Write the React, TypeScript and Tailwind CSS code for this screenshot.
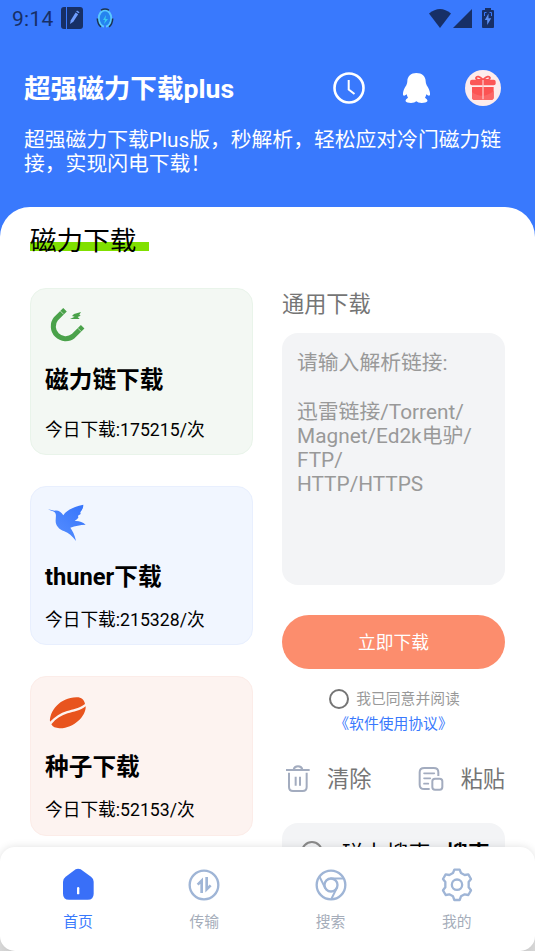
import { useState } from 'react';
import type { ReactNode } from 'react';

type DownloadCard = {
    title: string;
    count: string;
    className: string;
    titleClassName: string;
    countClassName: string;
    icon: ReactNode;
};

type Tab = {
    label: string;
    icon: ReactNode;
};

const MagnetIcon = () => (
    <svg className="w-[45px] h-[45px]" viewBox="77 84 135 135" fill="none">
        <path d="M137 104L110 131A37 37 0 0 0 162 183L190 155" stroke="#4aa24a" strokeWidth="15" />
        <path d="M123 108L133 118M176 160L186 170" stroke="#f3f8f3" strokeWidth="2" />
        <path d="M185 111L164 117L158 123L166 125L152 132H181L175 126L184 122L180 119Z" fill="#4aa24a" />
    </svg>
);

const BirdIcon = () => (
    <svg className="w-[45px] h-[45px]" viewBox="75 78 135 135">
        <defs>
            <linearGradient id="bird" x1="0" y1="1" x2="1" y2="0">
                <stop offset="0" stopColor="#5b93ff" />
                <stop offset="1" stopColor="#3573fb" />
            </linearGradient>
        </defs>
        <path
            d="M84 103L104 107C114 105 123 110 130 121C140 105 160 96 190 89C190 99 186 105 181 112L182 117L174 122L175 128C172 132 168 135 164 138C178 137 187 141 197 149C180 149 166 153 151 158C157 167 165 180 168 198C156 183 146 174 133 169C116 163 106 150 107 136C107 126 110 118 104 112C98 108 90 106 84 103Z"
            fill="url(#bird)"
        />
    </svg>
);

const SeedIcon = () => (
    <svg className="w-[45px] h-[45px]" viewBox="75 78 135 135" fill="none">
        <path
            d="M90 170C88 140 120 96 171 97C184 97 193 105 195 117C178 130 158 133 141 138C121 144 105 155 90 170Z"
            fill="#e8541e"
        />
        <path
            d="M94 178C108 161 125 150 143 145C161 140 181 137 197 124C199 155 158 192 118 190C107 189 98 186 94 178Z"
            fill="#e8541e"
        />
    </svg>
);

const cards: DownloadCard[] = [
    {
        title: '磁力链下载',
        count: '今日下载:175215/次',
        className: 'h-[167px] mb-[31px] bg-[#f3f8f3] border-[#e9f4ea]',
        titleClassName: 'mt-[14px]',
        countClassName: 'mt-5',
        icon: <MagnetIcon />,
    },
    {
        title: 'thuner下载',
        count: '今日下载:215328/次',
        className: 'h-[159px] mb-[31px] bg-[#f1f6ff] border-[#e8effe]',
        titleClassName: 'mt-[13px]',
        countClassName: 'mt-[13px]',
        icon: <BirdIcon />,
    },
    {
        title: '种子下载',
        count: '今日下载:52153/次',
        className: 'h-[160px] bg-[#fdf3f0] border-[#fcece8]',
        titleClassName: 'mt-[13px]',
        countClassName: 'mt-[13px]',
        icon: <SeedIcon />,
    },
];

const tabs: Tab[] = [
    {
        label: '首页',
        icon: (
            <svg className="w-9 h-9" viewBox="181 96 108 108">
                <path
                    d="M228 103Q235 99 243 103L274 125Q282 131 282 140V176Q282 194 264 194H208Q190 194 190 176V140Q190 131 198 125Z"
                    fill="#396ff8"
                />
                <rect x="232" y="156" width="7" height="22" rx="3.5" fill="#fff" />
            </svg>
        ),
    },
    {
        label: '传输',
        icon: (
            <svg className="w-9 h-9" viewBox="559 96 108 108" fill="none" stroke="#9fb5d6">
                <circle cx="613" cy="150" r="43" strokeWidth="7" />
                <path d="M606 174V137L594 149M621 126V163L633 151" strokeWidth="8" />
            </svg>
        ),
    },
    {
        label: '搜索',
        icon: (
            <svg className="w-9 h-9" viewBox="128 96 108 108" fill="none" stroke="#9fb5d6" strokeWidth="7">
                <circle cx="182" cy="150" r="43" />
                <circle cx="182" cy="150" r="19.5" />
                <path d="M180 130.500H219M165 160L148 126M200 158L183 192" strokeWidth="6" />
            </svg>
        ),
    },
    {
        label: '我的',
        icon: (
            <svg className="w-9 h-9" viewBox="507 96 108 108" fill="none" stroke="#9fb5d6" strokeWidth="7" strokeLinejoin="round">
                <path d="M553 104H569L573 114L584 120L595 118L603 132L596 141V157L603 166L595 180L584 178L573 184L569 195H553L549 184L538 178L527 180L519 166L526 157V141L519 132L527 118L538 120L549 114Z" />
                <circle cx="561" cy="149" r="15.500" />
            </svg>
        ),
    },
];

function StatusBar() {
    return (
        <div className="h-9 pl-3 pr-[41px] flex items-center justify-between text-[#172f66]">
            <div className="flex items-center">
                <span className="w-[49px] pt-px text-[21px] leading-9 tracking-[0.3px]">9:14</span>
                <svg className="w-[22px] h-[22px]" viewBox="0 0 22 22">
                    <rect width="22" height="22" rx="3" fill="#172f66" />
                    <path d="M5.500 0V22" stroke="#3979fd" strokeWidth="1" />
                    <path d="M9 17L9.800 13.200L14.600 5.600L17.200 7.200L12.300 14.800Z" fill="#6f9dff" />
                    <path d="M15.200 4.700L16 3.600L18.500 5.200L17.800 6.300Z" fill="#6f9dff" />
                </svg>
                <svg className="ml-[13px] w-[18px] h-[21px]" viewBox="0 0 18 21" fill="none">
                    <ellipse cx="9" cy="10.500" rx="6.300" ry="8.300" fill="#2583ef" stroke="#5ac8ff" strokeWidth="2" />
                    <path d="M5 18.800C3 17.500 1.500 14.500 1.300 10.500M5 2.200Q9 0 13 2.200M16.700 10.500C16.500 14.500 15 17.500 13 18.800" stroke="#1b344f" strokeWidth="1.500" />
                    <path d="M10 7L7 12H9L8 16L12 11H9.500Z" fill="#39c9ef" />
                    <path d="M9 17V21" stroke="#3979fd" strokeWidth="2" />
                </svg>
            </div>
            <div className="flex items-center">
                <svg className="w-[22px] h-[19px]" viewBox="0 0 22 19" fill="currentColor">
                    <path d="M0 4.500Q11-4.500 22 4.500L11 19Z" />
                </svg>
                <svg className="ml-0.5 w-[19px] h-[19px]" viewBox="0 0 19 19" fill="currentColor">
                    <path d="M19 0V19H0Z" />
                </svg>
                <svg className="ml-2.5 mb-px w-3 h-5" viewBox="0 0 12 20">
                    <path d="M3 2V0H9V2H11Q12 2 12 3V19Q12 20 11 20H1Q0 20 0 19V3Q0 2 1 2Z" fill="#172f66" />
                    <path d="M6.500 5.500L2.800 12H5.200V17L9.200 10.300H6.500Z" fill="#5b8ff5" />
                    <path d="M2.500 8V4.500H4.500M7.500 4.500H9.500V8" stroke="#3979fd" fill="none" />
                </svg>
            </div>
        </div>
    );
}

function Header() {
    return (
        <header className="px-6 text-white">
            <div className="flex items-center justify-between h-[104px] pr-2.5">
                <h1 className="pt-0.5 text-[26.600px] leading-10 font-bold">超强磁力下载plus</h1>
                <div className="flex items-center">
                    <svg className="w-8 h-8" viewBox="0 0 32 32" fill="none" stroke="#fff">
                        <circle cx="16" cy="16" r="14.500" strokeWidth="2.600" />
                        <path d="M15.700 8V17.500L21.500 22" strokeWidth="2" />
                    </svg>
                    <svg className="ml-[38px] w-[27px] h-[30px]" viewBox="309 219 81 90" fill="#fff">
                        <path d="M349 219C366 219 377 229 377 244Q377 250 380 256C387 266 391 276 390 285Q387 290 379 283Q378 289 375 293Q384 298 382 304Q378 309 365 309Q354 309 349 304Q344 309 333 309Q320 309 317 304Q315 298 324 293Q321 289 320 283Q312 290 309 285C308 276 312 266 319 256Q322 250 322 244C322 229 333 219 349 219Z" />
                    </svg>
                    <svg className="ml-[35px] w-9 h-9" viewBox="495 210 108 108">
                        <circle cx="549" cy="264" r="54" fill="#fdecec" />
                        <path d="M549 239Q526 241 528 233Q532 224 549 239Q566 224 570 233Q572 241 549 239Z" fill="none" stroke="#f95353" strokeWidth="5" />
                        <rect x="510" y="239" width="77" height="17" rx="6" fill="#fb5757" />
                        <path d="M516 261H581V292Q581 300 573 300H524Q516 300 516 292Z" fill="#fc5353" />
                        <path d="M516 276Q548 300 581 273V292Q581 300 573 300H524Q516 300 516 292Z" fill="#fb6767" />
                        <path d="M549 240V298" stroke="#fdc4c4" strokeWidth="4" />
                    </svg>
                </div>
            </div>
            <p className="-mt-3 -mr-2 h-[79px] text-[20.800px] leading-[24.400px]">
                超强磁力下载Plus版，秒解析，轻松应对冷门磁力链
                <br />
                接，实现闪电下载！
            </p>
        </header>
    );
}

function ParsePanel() {
    const [agreed, setAgreed] = useState(false);

    return (
        <div className="w-[223px] flex flex-col text-[#757575]">
            <h3 className="h-[45px] pt-px text-[22.200px] leading-[30px]">通用下载</h3>
            <div className="h-[252px] px-[15px] pt-[18px] rounded-[16px] bg-[#f3f4f6] text-[#999] text-[20.800px] leading-[24.250px] whitespace-pre">
                {'请输入解析链接:\n\n迅雷链接/Torrent/\nMagnet/Ed2k电驴/\nFTP/\nHTTP/HTTPS'}
            </div>
            <button className="mt-[30px] h-[54px] pt-0.5 rounded-full bg-[#fc8d6d] text-white text-[17.800px]">立即下载</button>
            <button
                className="mt-[18px] ml-0.5 h-6 flex items-center justify-center text-[14.800px] text-[#999]"
                onClick={() => setAgreed(!agreed)}
            >
                <span className={agreed ? 'w-5 h-5 rounded-full border-2 border-[#757575] bg-[#3979fd]' : 'w-5 h-5 rounded-full border-2 border-[#757575]'} />
                <span className="ml-[7px]">我已同意并阅读</span>
            </button>
            <a className="h-[26px] text-center text-[14.800px] leading-[26px] text-[#3979fd]">《软件使用协议》</a>
            <div className="mt-[27px] h-[30px] flex items-center justify-between text-[22.200px] leading-[30px]">
                <div className="flex items-center">
                    <svg className="ml-[3px] w-[26px] h-7" viewBox="45 61 78 84" fill="none" stroke="#a3acbf" strokeWidth="6">
                        <path d="M48 76H119M71 75Q73 65 84 65Q95 65 97 75" />
                        <path d="M57 84V127Q57 139 69 139H98Q110 139 110 127V84M77 96V123M90 96V123" />
                    </svg>
                    <span className="ml-[16px]">清除</span>
                </div>
                <div className="flex items-center">
                    <svg className="w-[26px] h-[26px]" viewBox="444 62 78 78" fill="none" stroke="#a3acbf" strokeWidth="6">
                        <path d="M479 131H463Q449 131 449 118V81Q449 68 463 68H491Q505 68 505 81V92" />
                        <path d="M462 84H493M462 99H481M462 115H475" strokeLinecap="round" strokeWidth="5" />
                        <rect x="487" y="100" width="30" height="33" rx="8" />
                    </svg>
                    <span className="ml-[17px]">粘贴</span>
                </div>
            </div>
            <div className="mt-[29px] h-[60px] shrink-0 px-[15px] rounded-[16px] bg-[#f3f4f6] flex items-center text-[22.200px] text-black">
                <svg className="ml-1 w-6 h-6" viewBox="0 0 24 24" fill="none" stroke="#8a8a8a" strokeWidth="2">
                    <circle cx="11" cy="11" r="10" />
                    <path d="M18 18L23 23" />
                </svg>
                <span className="ml-[17px] pt-1 whitespace-nowrap">磁力搜索</span>
                <span className="ml-[15px] pt-1 font-bold whitespace-nowrap">搜索</span>
            </div>
        </div>
    );
}

function BottomNav() {
    const [active, setActive] = useState(0);

    return (
        <div className="relative z-10 h-[104px] shrink-0 bg-linear-to-b from-white from-60% to-[#d8d8d8]">
            <nav className="h-full px-[15px] flex rounded-[15px] bg-white shadow-[0_0_8px_rgba(0,0,0,0.12)]">
                {tabs.map((tab, i) => (
                    <button
                        key={tab.label}
                        className="flex-1 pt-5 flex flex-col items-center"
                        onClick={() => setActive(i)}
                    >
                        {tab.icon}
                        <span className={active === i ? 'mt-2 text-[14.800px] leading-[22px] text-[#3979fd]' : 'mt-2 text-[14.800px] leading-[22px] text-[#a5adba]'}>
                            {tab.label}
                        </span>
                    </button>
                ))}
            </nav>
        </div>
    );
}

export default function App() {
    return (
        <div className="w-full h-[951px] flex flex-col overflow-hidden bg-[#3979fd] font-[Roboto,'Noto_Sans_CJK_SC',sans-serif]">
            <StatusBar />
            <Header />

            <main className="flex-1 min-h-0 overflow-hidden px-[30px] pt-[14px] bg-white rounded-t-[30px]">
                <h2 className="w-[119px] h-10 text-[26.600px] leading-10 text-black bg-[linear-gradient(#80e000,#80e000)] bg-[length:119px_9px] bg-[position:0_21px] bg-no-repeat">
                    磁力下载
                </h2>
                <div className="mt-[27px] flex justify-between">
                    {/* Download sources */}
                    <div className="w-[223px] flex flex-col text-black">
                        {cards.map((card) => (
                            <div key={card.title} className={`shrink-0 px-[14px] pt-[14px] border rounded-[16px] ${card.className}`}>
                                {card.icon}
                                <div className={`text-[23.700px] leading-9 font-bold ${card.titleClassName}`}>{card.title}</div>
                                <div className={`text-[17.700px] leading-6 ${card.countClassName}`}>{card.count}</div>
                            </div>
                        ))}
                    </div>

                    <ParsePanel />
                </div>
            </main>

            <BottomNav />
        </div>
    );
}
